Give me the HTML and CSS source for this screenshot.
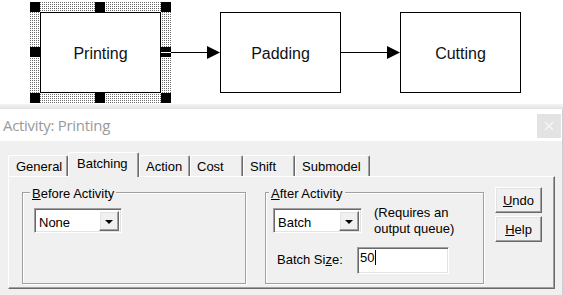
FILE: index.html
```html
<!DOCTYPE html>
<html>
<head>
<meta charset="utf-8">
<link rel="stylesheet" href="styles.css">
</head>
<body>
<div class="diagram">
  <svg width="563" height="104" viewBox="0 0 563 104" shape-rendering="crispEdges">
    <defs>
      <pattern id="hatch" width="2" height="2" patternUnits="userSpaceOnUse">
        <rect width="2" height="2" fill="#fff"/>
        <rect width="1" height="1" fill="#6a6a6a"/>
      </pattern>
    </defs>
    <!-- selection frame -->
    <rect x="30" y="2" width="141" height="10" fill="url(#hatch)"/>
    <rect x="30" y="93" width="141" height="10" fill="url(#hatch)"/>
    <rect x="30" y="2" width="10" height="101" fill="url(#hatch)"/>
    <rect x="161" y="2" width="10" height="101" fill="url(#hatch)"/>
    <!-- boxes -->
    <rect x="40.5" y="12.5" width="120" height="80" fill="#fff" stroke="#000"/>
    <rect x="220.5" y="12.5" width="120" height="80" fill="#fff" stroke="#000"/>
    <rect x="400.5" y="12.5" width="120" height="80" fill="#fff" stroke="#000"/>
    <!-- handles -->
    <rect x="30" y="2" width="10" height="10" fill="#000"/>
    <rect x="95" y="2" width="10" height="10" fill="#000"/>
    <rect x="161" y="2" width="10" height="10" fill="#000"/>
    <rect x="30" y="47" width="10" height="10" fill="#000"/>
    <rect x="161" y="47" width="10" height="10" fill="#000"/>
    <rect x="30" y="93" width="10" height="10" fill="#000"/>
    <rect x="95" y="93" width="10" height="10" fill="#000"/>
    <rect x="161" y="93" width="10" height="10" fill="#000"/>
    <rect x="161" y="52" width="10" height="1" fill="#fff"/>
    <!-- connectors -->
    <rect x="171" y="52" width="37" height="1" fill="#000"/>
    <polygon points="207,46 220,52.5 207,59" fill="#000" shape-rendering="auto"/>
    <rect x="341" y="52" width="47" height="1" fill="#000"/>
    <polygon points="387,46 400,52.5 387,59" fill="#000" shape-rendering="auto"/>
    <!-- labels -->
    <text x="100.5" y="59" class="node-label">Printing</text>
    <text x="280.5" y="59" class="node-label">Padding</text>
    <text x="460.5" y="59" class="node-label">Cutting</text>
  </svg>
</div>
<div class="band"></div>
<div class="window">
  <div class="titlebar">
    <span class="title">Activity: Printing</span>
    <span class="close">
      <svg width="10" height="10" viewBox="0 0 10 10"><path d="M1 1 L9 9 M9 1 L1 9" stroke="#f7f7f7" stroke-width="1.3" fill="none"/></svg>
    </span>
  </div>
  <div class="body">
    <div class="tabs">
      <div class="tab t-general">General</div>
      <div class="tab active t-batching">Batching</div>
      <div class="tab t-action">Action</div>
      <div class="tab t-cost">Cost</div>
      <div class="tab t-shift">Shift</div>
      <div class="tab t-submodel">Submodel</div>
    </div>
    <div class="panel">
      <div class="group before">
        <div class="legend"><u>B</u>efore Activity</div>
        <div class="combo combo-none">
          <span class="combo-text">None</span>
          <span class="combo-btn"><span class="arrow"></span></span>
        </div>
      </div>
      <div class="group after">
        <div class="legend legend-after"><u>A</u>fter Activity</div>
        <div class="row1">
          <div class="combo combo-batch">
            <span class="combo-text">Batch</span>
            <span class="combo-btn"><span class="arrow"></span></span>
          </div>
          <div class="note">(Requires an<br>output queue)</div>
        </div>
        <div class="row2">
          <span class="label">Batch Si<u>z</u>e:</span>
          <div class="textbox">50<span class="caret"></span></div>
        </div>
      </div>
      <div class="buttons">
        <div class="btn"><u>U</u>ndo</div>
        <div class="btn"><u>H</u>elp</div>
      </div>
    </div>
  </div>
</div>
</body>
</html>
```
FILE: styles.css
```css
html, body {
  margin: 0;
  padding: 0;
}
body {
  width: 563px;
  height: 295px;
  overflow: hidden;
  background: #f0f0f0;
  font-family: "Liberation Sans", Arial, sans-serif;
  font-size: 13px;
  line-height: 15px;
  color: #000;
}
.diagram {
  height: 104px;
  background: #fff;
}
.diagram svg {
  display: block;
}
.node-label {
  font-family: "Liberation Sans", Arial, sans-serif;
  font-size: 16px;
  text-anchor: middle;
  fill: #111;
}
.band {
  height: 5px;
  background: linear-gradient(#f4f4f4, #e2e2e2);
}
.window {
  height: 186px;
  border-right: 1px solid #cfcfcf;
  width: 562px;
}
.titlebar {
  height: 32px;
  background: #fff;
  display: flex;
  justify-content: space-between;
  align-items: flex-start;
}
.title {
  font-family: "Open Sans", "Noto Sans", sans-serif;
  font-size: 15px;
  letter-spacing: -0.3px;
  line-height: 32px;
  padding-left: 3px;
  color: #9a9a9a;
}
.close {
  width: 24px;
  height: 24px;
  margin-top: 5px;
  margin-right: 1px;
  background: #e3e3e3;
  display: flex;
  align-items: center;
  justify-content: center;
}
.close svg {
  display: block;
}
.body {
  padding-top: 11px;
}
.tabs {
  display: flex;
  align-items: flex-end;
  margin-left: 8px;
  height: 24px;
}
.tab {
  box-sizing: border-box;
  height: 21px;
  padding: 3px 0 0 6px;
  text-align: left;
  border-top: 1px solid #fff;
  border-left: 1px solid #fff;
  border-right: 1px solid #696969;
  border-radius: 2px 2px 0 0;
  box-shadow: inset -1px 0 0 #a0a0a0;
  background: #f0f0f0;
}
.t-general { padding-left: 7px; }
.tab.active {
  height: 25px;
  margin-bottom: -1px;
  padding-left: 8px;
  position: relative;
  z-index: 1;
}
.t-general { width: 60px; }
.t-batching { width: 71px; }
.t-action { width: 51px; }
.t-cost { width: 53px; }
.t-shift { width: 52px; }
.t-submodel { width: 75px; }

.panel {
  box-sizing: border-box;
  margin-left: 8px;
  width: 547px;
  height: 113px;
  border: 1px solid;
  border-color: #fff #696969 #696969 #fff;
  box-shadow: inset -1px -1px 0 #a0a0a0;
  padding: 10px 0 0 13px;
  display: flex;
  align-items: flex-start;
}
.group {
  box-sizing: border-box;
  height: 92px;
  margin-top: 5px;
  border: 1px solid #a0a0a0;
  box-shadow: inset 1px 1px 0 #fff, 1px 1px 0 #fff;
}
.before {
  width: 224px;
}
.after {
  width: 219px;
  margin-left: 19px;
}
.legend {
  display: table;
  margin: -7px 0 0 7px;
  padding: 0 2px;
  background: #f0f0f0;
}
.legend-after {
  margin-left: 3px;
}
.combo {
  box-sizing: border-box;
  height: 25px;
  background: #fff;
  border: 1px solid;
  border-color: #a0a0a0 #fff #fff #a0a0a0;
  box-shadow: inset 1px 1px 0 #696969, inset -1px -1px 0 #e3e3e3;
  display: flex;
  align-items: center;
  justify-content: space-between;
  padding: 1px 2px 0 4px;
}
.combo-none {
  width: 88px;
  margin: 7px 0 0 11px;
}
.combo-batch {
  width: 89px;
  margin-left: 7px;
}
.combo-text {
  padding-top: 2px;
}
.combo-btn {
  box-sizing: border-box;
  width: 20px;
  height: 20px;
  background: #f0f0f0;
  border: 1px solid;
  border-color: #fff #696969 #696969 #fff;
  box-shadow: inset -1px -1px 0 #a0a0a0, inset 1px 1px 0 #e3e3e3;
  display: flex;
  align-items: center;
  justify-content: center;
}
.arrow {
  width: 0;
  height: 0;
  border-left: 4px solid transparent;
  border-right: 4px solid transparent;
  border-top: 4px solid #000;
  margin-top: 1px;
}
.row1 {
  display: flex;
  align-items: flex-start;
  margin-top: 7px;
}
.note {
  margin: -3px 0 0 12px;
  line-height: 16px;
}
.row2 {
  display: flex;
  align-items: flex-start;
  margin-top: 10px;
}
.label {
  width: 80px;
  margin: 5px 0 0 11px;
}
.textbox {
  box-sizing: border-box;
  width: 92px;
  height: 27px;
  background: #fff;
  border: 1px solid;
  border-color: #a0a0a0 #fff #fff #a0a0a0;
  box-shadow: inset 1px 1px 0 #696969, inset -1px -1px 0 #e3e3e3;
  padding: 2px 0 0 2px;
  display: flex;
  align-items: flex-start;
}
.caret {
  width: 1px;
  height: 15px;
  background: #000;
  margin-left: 1px;
}
.buttons {
  display: flex;
  flex-direction: column;
  gap: 3px;
  margin-left: 11px;
}
.btn {
  box-sizing: border-box;
  width: 47px;
  height: 26px;
  border: 1px solid;
  border-color: #fff #696969 #696969 #fff;
  box-shadow: inset -1px -1px 0 #a0a0a0, inset 1px 1px 0 #e3e3e3;
  background: #f0f0f0;
  display: flex;
  align-items: center;
  justify-content: center;
}
```
